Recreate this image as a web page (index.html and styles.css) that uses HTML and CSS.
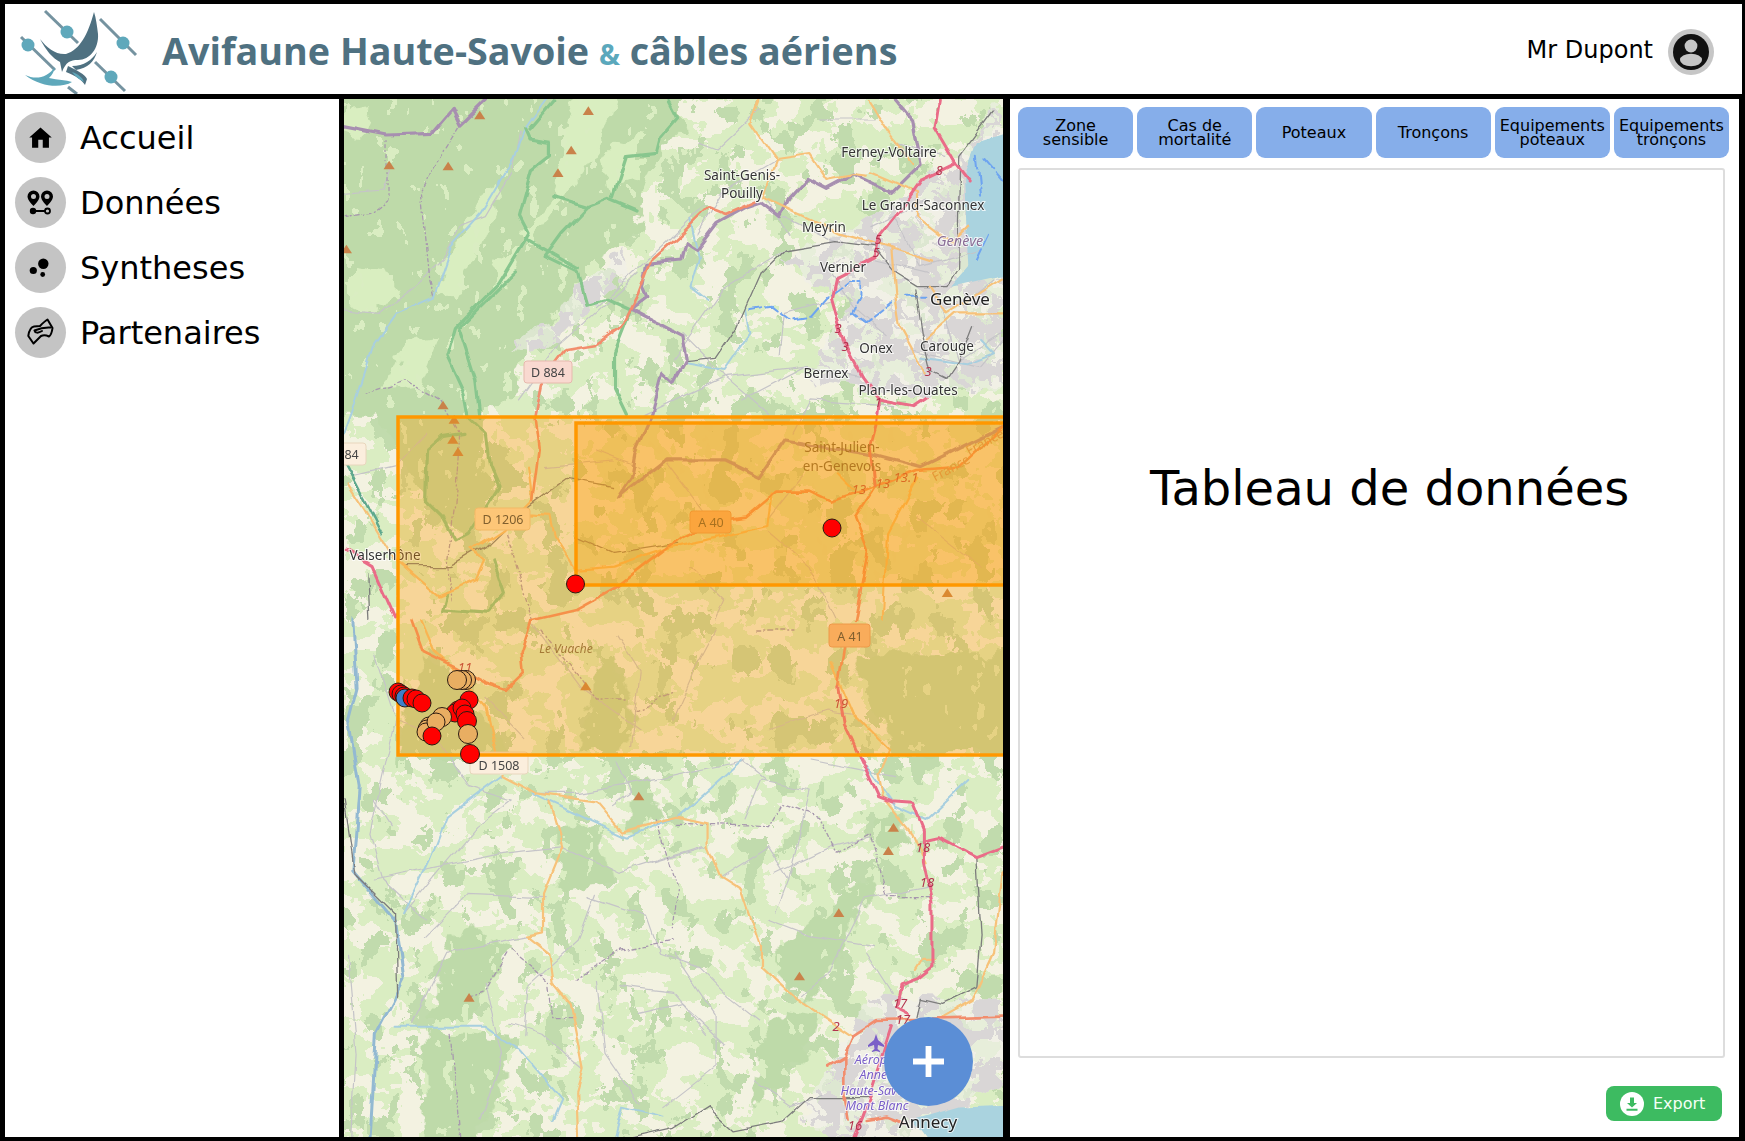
FILE: index.html
```html
<!DOCTYPE html>
<html lang="fr">
<head>
<meta charset="utf-8">
<title>Avifaune Haute-Savoie &amp; câbles aériens</title>
<link rel="stylesheet" href="styles.css">
</head>
<body>
<div class="app">
  <header class="topbar">
    <svg class="logo" viewBox="5 4 145 90" aria-hidden="true">
      <g class="logo-lines">
        <path d="M45,11 L78,43"/><path d="M100,19 L136,55"/><path d="M21,37 L55,70"/><path d="M95,62 L125,91"/><path d="M68,87 L77,94"/>
      </g>
      <g class="logo-dots">
        <circle cx="67" cy="32" r="6.5"/><circle cx="123" cy="43" r="6.5"/><circle cx="28" cy="45" r="6.5"/><circle cx="111" cy="77" r="6.5"/>
      </g>
      <path class="logo-dark" d="M94,12 C88,34 80,50 66,54 C56,55 47,48 40,39 C46,50 52,58 60,62 L62,72 C66,62 70,60 78,60 C90,60 99,48 98,34 C97,26 96,18 94,12Z"/>
      <path class="logo-dark" d="M97,52 C94,62 88,68 76,70 L72,66 C84,66 92,60 97,52Z"/>
      <path class="logo-teal" d="M25,75 C36,80 47,78 55,67 C54,72 52,75 49,78 C58,80 66,80 72,82 C62,88 42,88 25,75Z"/>
      <path class="logo-dark" d="M68,66 C76,70 85,74 87,79 L85,85 C82,80 76,76 66,72Z"/>
      <path class="logo-teal" d="M72,72 C78,74 82,77 84,82 C80,80 76,77 72,72Z"/>
    </svg>
    <h1 class="title">Avifaune Haute-Savoie <span class="amp">&amp;</span> câbles aériens</h1>
    <div class="user">
      <span class="user-name">Mr Dupont</span>
      <svg class="avatar" viewBox="0 0 46 46" aria-hidden="true">
        <circle cx="23" cy="23" r="23" fill="#c6c6c6"/>
        <circle cx="23" cy="23" r="18" fill="#111"/>
        <circle cx="23" cy="17" r="6.4" fill="#c6c6c6"/>
        <ellipse cx="23" cy="31" rx="11" ry="6.2" fill="#c6c6c6"/>
      </svg>
    </div>
  </header>

  <div class="main">
    <nav class="sidebar">
      <a class="nav-item">
        <span class="nav-icon"><svg viewBox="0 0 24 24" class="ico-home"><path d="M10 21v-7h4v7h5.500v-9H22L12 3 2 12h2.500v9z"/></svg></span>
        <span class="nav-label">Accueil</span>
      </a>
      <a class="nav-item">
        <span class="nav-icon"><svg viewBox="0 0 51 51" class="ico-full">
          <path fill-rule="evenodd" d="M18.500,13.500 a6,6 0 0 1 6,6 c0,4 -6,9.500 -6,9.500 s-6,-5.500 -6,-9.500 a6,6 0 0 1 6,-6z M18.500,17 a2.500,2.500 0 1 0 0,5 a2.500,2.500 0 1 0 0,-5z"/>
          <path fill-rule="evenodd" d="M32,13.500 a6,6 0 0 1 6,6 c0,4 -6,9.500 -6,9.500 s-6,-5.500 -6,-9.500 a6,6 0 0 1 6,-6z M32,17 a2.500,2.500 0 1 0 0,5 a2.500,2.500 0 1 0 0,-5z"/>
          <circle cx="18" cy="34" r="3.200"/>
          <path d="M18,34 H30" stroke="#000" stroke-width="2"/>
          <circle cx="32.500" cy="34" r="2.500" fill="none" stroke="#000" stroke-width="1.800"/>
        </svg></span>
        <span class="nav-label">Données</span>
      </a>
      <a class="nav-item">
        <span class="nav-icon"><svg viewBox="0 0 51 51" class="ico-full">
          <circle cx="28.300" cy="21.800" r="5.200"/><circle cx="18.300" cy="28.500" r="3.600"/><circle cx="27.700" cy="32.500" r="2.400"/>
        </svg></span>
        <span class="nav-label">Syntheses</span>
      </a>
      <a class="nav-item">
        <span class="nav-icon"><svg viewBox="0 0 51 51" class="ico-full">
          <path class="hs" d="M13.300,29 C14,24 15,20 19,19.500 L25,19 C28,16 30,14 32.500,12.500 L37.500,21 C37,25 36,28 34,29.500 C31,28 28,28 26,29 L18.500,36.500 Z"/>
          <path class="hs" d="M19.500,23.500 C23,22 28,20 35.500,20.500 M19.500,23.500 C20,26 23,26.500 27,24"/>
        </svg></span>
        <span class="nav-label">Partenaires</span>
      </a>
    </nav>

    <section class="map">
      <svg class="map-svg" viewBox="344 99 659 1038" aria-label="Carte">
        <defs>
          <filter id="fForest" x="344" y="99" width="659" height="1038" filterUnits="userSpaceOnUse" color-interpolation-filters="sRGB">
            <feTurbulence type="fractalNoise" baseFrequency="0.035 0.028" numOctaves="5" seed="7"/>
            <feColorMatrix values="0 0 0 0 .755  0 0 0 0 .86  0 0 0 0 .68  1 0 0 0 0"/>
            <feComponentTransfer><feFuncA type="discrete" tableValues="0 0 0 0 0 0 1 1 1 1"/></feComponentTransfer>
            <feGaussianBlur stdDeviation=".5"/>
          </filter>
          <filter id="fLight" x="344" y="99" width="659" height="1038" filterUnits="userSpaceOnUse" color-interpolation-filters="sRGB">
            <feTurbulence type="fractalNoise" baseFrequency="0.03 0.04" numOctaves="4" seed="23"/>
            <feColorMatrix values="0 0 0 0 .855  0 0 0 0 .93  0 0 0 0 .76  1 0 0 0 0"/>
            <feComponentTransfer><feFuncA type="discrete" tableValues="0 0 0 0 0 1 1 1 1 1"/></feComponentTransfer>
            <feGaussianBlur stdDeviation=".5"/>
          </filter>
          <filter id="fStreak" x="344" y="99" width="659" height="1038" filterUnits="userSpaceOnUse" color-interpolation-filters="sRGB">
            <feTurbulence type="fractalNoise" baseFrequency="0.07 0.05" numOctaves="3" seed="41"/>
            <feColorMatrix values="0 0 0 0 .855  0 0 0 0 .93  0 0 0 0 .76  1 0 0 0 0"/>
            <feComponentTransfer><feFuncA type="discrete" tableValues="0 0 0 0 0 0 0 1 1 1"/></feComponentTransfer>
            <feGaussianBlur stdDeviation=".5"/>
          </filter>
          <filter id="fUrban" x="344" y="99" width="659" height="1038" filterUnits="userSpaceOnUse" color-interpolation-filters="sRGB">
            <feTurbulence type="fractalNoise" baseFrequency="0.05" numOctaves="3" seed="11"/>
            <feColorMatrix values="0 0 0 0 .85  0 0 0 0 .84  0 0 0 0 .84  1 0 0 0 0"/>
            <feComponentTransfer><feFuncA type="discrete" tableValues="0 0 0 0 0 1 1 1 1 1"/></feComponentTransfer>
          </filter>
          <filter id="wobF" x="344" y="99" width="659" height="1038" filterUnits="userSpaceOnUse" color-interpolation-filters="sRGB">
            <feTurbulence type="fractalNoise" baseFrequency="0.05" numOctaves="3" seed="5" result="n"/>
            <feDisplacementMap in="SourceGraphic" in2="n" scale="26" xChannelSelector="R" yChannelSelector="G"/>
          </filter>
          <filter id="wobR" x="344" y="99" width="659" height="1038" filterUnits="userSpaceOnUse" color-interpolation-filters="sRGB">
            <feTurbulence type="fractalNoise" baseFrequency="0.035" numOctaves="2" seed="9" result="n"/>
            <feDisplacementMap in="SourceGraphic" in2="n" scale="9" xChannelSelector="R" yChannelSelector="G"/>
          </filter>
          <clipPath id="cUrban">
            <path d="M780,260 L860,225 L920,180 L960,160 L1003,100 L1003,390 L900,395 L810,380 L850,300Z"/>
            <path d="M800,1120 L870,995 L1003,1000 L1003,1080 L920,1137 L830,1137Z"/>
            <path d="M505,350 L530,330 L560,320 L570,295 L600,270 L630,250 L620,280 L590,310 L560,340 L530,352Z"/>
          </clipPath>
          <path id="pk" d="M-13,13 L0,-13 L13,13Z"/>
        </defs>

        <rect class="m-base" x="344" y="99" width="659" height="1038"/>
        <rect x="344" y="99" width="659" height="1038" filter="url(#fLight)"/>
        <rect x="344" y="99" width="659" height="1038" filter="url(#fForest)"/>

        <g filter="url(#wobF)">
          <g transform="matrix(.4274 0 0 .3333 340 100)">
            <path class="f" d="M-80,-80 L800,-80 L800,80 L720,230 L690,420 L590,500 L520,640 L440,720 L400,880 L340,945 L330,1100 L370,1160 L300,1320 L200,1200 L130,1050 L80,950 L-80,950Z"/>
          </g>
          <g transform="matrix(.4274 0 0 .3333 340 620)">
            <path class="f" d="M200,1230 L390,1250 L380,1400 L290,1640 L200,1640Z"/>
            <path class="f" d="M240,1000 L300,910 L400,990 L340,1100 L300,1200 L220,1200Z"/>
            <path class="f" d="M1020,980 L1240,760 L1230,850 L1150,1060 L1090,1140 L1020,1050Z"/>
            <path class="f" d="M980,1300 L1040,1160 L1120,1180 L1080,1330 L960,1470Z"/>
            <path class="f" d="M680,480 L710,470 L760,590 L680,650Z"/>
            <path class="f" d="M1240,600 L1320,590 L1320,680 L1250,690Z"/>
            <path class="f" d="M500,640 L600,600 L640,800 L520,820Z"/>
            <path class="f" d="M200,100 L420,420 L130,420Z"/>
            <path class="f" d="M620,60 L700,300 L660,400 L560,400Z"/>
            <path class="f" d="M1200,100 L1640,100 L1640,400 L1300,400Z"/>
          </g>
          <g class="lgt">
            <path d="M490,180 L500,200 L480,250 L455,300 L440,295 L445,260 L470,215Z"/>
            <path d="M552,200 L575,90 L617,90 L600,150 L570,190 L530,240 L520,232Z"/>
            <path d="M350,265 L385,270 L400,300 L370,310 L350,300Z"/>
            <path d="M405,340 L440,335 L420,385 L385,390 L400,355Z"/>
            <path d="M330,115 L375,110 L360,140 L330,135Z"/>
            <path d="M500,250 L520,250 L505,290 L490,290Z"/>
            <path d="M600,160 L640,130 L640,180 L610,190Z"/>
          </g>
        </g>
        <rect x="344" y="99" width="659" height="1038" filter="url(#fStreak)"/>
        <g filter="url(#wobF)">
          <rect class="m-urbanbase" x="344" y="99" width="659" height="1038" clip-path="url(#cUrban)"/>
          <g clip-path="url(#cUrban)"><rect x="344" y="99" width="659" height="1038" filter="url(#fUrban)"/></g>
        </g>

        <g filter="url(#wobR)">
        <g class="t" transform="matrix(.4274 0 0 .3333 340 100)">
          <path class="lake" d="M1640,70 L1490,130 L1460,230 L1470,500 L1430,560 L1640,500Z"/>
          <g class="mn">
            <path d="M700,520 L510,740 L420,900"/><path d="M1040,450 L900,560 L780,780"/><path d="M1160,425 L1040,350"/><path d="M850,320 L770,420 L600,620"/><path d="M1020,180 L900,270 L840,400"/><path d="M1100,800 L900,830 L800,890 L700,950"/><path d="M1220,830 L1090,800 L940,900"/><path d="M1370,300 L1240,380"/><path d="M800,700 L900,830 L1000,940"/><path d="M1150,600 L1040,640 L1030,760"/><path d="M1280,710 L1200,620 L1150,520"/><path d="M1400,590 L1450,780 L1550,700"/><path d="M1300,920 L1100,900 L1060,1000"/><path d="M1340,750 L1500,800 L1552,720"/><path d="M1470,600 L1530,540"/><path d="M10,630 L90,640 L170,560 L240,480 L280,380 L340,350 L400,220 L420,100"/><path d="M10,280 L100,270 L120,200"/><path d="M600,1050 L700,1100"/><path d="M760,1080 L860,1250"/><path d="M1080,1130 L1000,1260"/><path d="M1000,1290 L1100,1400 L1160,1560"/><path d="M820,1400 L900,1500 L880,1560"/><path d="M980,30 L880,150 L840,130"/><path d="M1120,60 L1250,60"/><path d="M1300,130 L1420,170"/><path d="M1300,350 L1360,500 L1500,450"/><path d="M1250,480 L1380,520"/><path d="M1000,300 L1050,400"/><path d="M480,1100 L640,1080"/><path d="M30,1130 L130,1100 L200,1000"/><path d="M1350,1250 L1500,1400"/>
          </g>
          <g class="dash-p">
            <path d="M10,350 L70,340 L110,300 L110,120"/><path d="M280,80 L190,270 L210,540 L220,590"/><path d="M60,880 L150,840 L240,910 L280,1000 L270,1200 L250,1400 L260,1500"/><path d="M390,1300 L450,1560"/>
          </g>
          <path class="river" d="M480,0 L430,90 L400,190 L330,340 L260,440 L220,590 L130,640 L80,730 L30,930 L10,1000"/>
          <path class="river-g" d="M10,1080 L40,1150 L100,1300"/>
          <path class="river" d="M810,790 L900,810 L960,700 L950,630"/>
          <path class="river" d="M820,360 L840,470 L820,560 L860,600"/>
          <path class="river" d="M1500,720 L1530,760 L1470,790 L1360,770"/>
          <g class="dash-b">
            <path d="M960,630 L1010,620 L1050,660 L1100,650 L1140,590 L1190,540 L1220,540 L1220,590 L1200,640 L1230,670 L1290,610"/><path d="M1320,590 L1370,590"/><path d="M1490,170 L1500,290"/><path d="M1490,480 L1520,400"/><path d="M1510,180 L1550,240"/>
          </g>
          <g class="rail">
            <path d="M810,785 L880,775 L930,680 L985,520 L1040,450 L1160,425 L1250,440 L1300,520 L1350,560 L1420,560 L1445,510 L1450,170 L1530,30"/><path d="M1345,570 L1360,700 L1380,810 L1420,835 L1450,780 L1480,680"/><path d="M440,1220 L530,1135 L640,1160"/><path d="M150,1400 L260,1400 L340,1340 L380,1290"/><path d="M550,1310 L640,1360 L790,1330"/><path d="M70,1560 L65,1420"/>
          </g>
          <path class="park" d="M430,90 L440,120 L490,130 L490,170 L450,210 L420,350 L440,400 L370,550 L270,680 L250,770 L290,880 L300,950 L340,1000 L350,1100 L370,1160 L300,1300 L270,1320 L240,1250 L200,1200 L205,1050 L240,1010 L290,1000"/>
          <path class="park" d="M500,290 L580,320 L630,295 L695,330 M580,320 L520,400 L480,470 L560,520 L580,610 L620,595 L680,630 L640,760 L640,860 L670,940"/>
          <path class="park" d="M770,0 L790,50 L750,110 L740,160 L670,170 L640,290 M430,415 L560,510 M440,90 L500,0 M415,510 L280,680 L320,840 L330,950"/>
          <path class="park" d="M360,1380 L385,1480 L350,1540 L240,1530 L250,1480"/>
          <path class="border" d="M10,80 L110,105 L215,100 L265,25 L285,75 L345,0"/>
          <path class="border" d="M1300,0 L1340,60 L1350,130 L1360,190 L1290,280 L1200,225 L1140,265 L1095,235 L1050,300 L1030,350 L985,305 L950,320 L880,370 L835,445 L810,425 L800,480 L720,490 L710,560 L720,590 L680,630 L800,710 L810,780 L780,850 L755,820 L730,940 L690,1060 L680,1130 L650,1190 L760,1080 L900,1080 L980,1130 L1040,1020 L1240,1060 L1360,1100 L1440,1050 L1550,980"/>
          <g class="sec">
            <path d="M980,0 L960,70 L1020,180 L1100,165 L1140,240 L1200,225 L1230,230"/><path d="M1020,180 L990,290 L1170,400 L1290,445 L1390,485"/><path d="M1235,0 L1290,110 L1340,190"/><path d="M1290,445 L1300,600 L1310,680 L1370,820"/><path d="M1370,720 L1440,640 L1568,640"/><path d="M1380,560 L1420,640 L1568,520"/><path d="M1240,220 L1350,280 L1350,350 L1430,430 L1470,380"/><path d="M20,1150 L60,1230 L130,1380 L230,1490 L320,1440 L340,1380 L310,1350 L380,1290 L450,1200 L440,1100"/><path d="M440,1240 L490,1245 L500,1310 L550,1410 L640,1400 L780,1340 L1000,1275 L1010,1180"/><path d="M1350,1130 L1280,1300 L1270,1560"/><path d="M1160,1120 L1200,1170"/>
          </g>
          <path class="pri" d="M970,305 L900,345 L860,325 L800,400 L730,480 L700,580 L660,680 L600,735 L530,750 L470,850 L455,950 L465,1050 L450,1200"/>
          <path class="pri" d="M450,1560 L550,1530 L650,1460 L800,1310 L870,1265 L950,1250 L1020,1175 L1100,1175 L1150,1205 L1210,1180 L1250,1160 L1350,1110 L1450,1100 L1550,980"/>
          <path class="pri" d="M1250,1160 L1205,1250 L1235,1350 L1205,1560"/>
          <path class="mot" d="M130,1560 L75,1400 L10,1350"/>
          <path class="mot" d="M1400,0 L1390,80 L1440,190 L1470,240"/>
          <path class="mot" d="M1440,190 L1360,240 L1310,330 L1260,410 L1250,470 L1160,530 L1150,590 L1180,730 L1220,830 L1260,900 L1340,920 L1370,895"/>
          <path class="mot" d="M1260,900 L1255,960 L1240,1030 L1250,1160"/>
        </g>

        <g class="b" transform="matrix(.4274 0 0 .3333 340 620)">
          <path class="lake" d="M1340,1500 L1450,1460 L1640,1450 L1640,1640 L1420,1640Z"/>
          <g class="mn">
            <path d="M80,100 L130,300 L70,640 L100,780 L200,900"/><path d="M130,300 L220,340 L300,500 L400,540"/><path d="M400,540 L320,620 L240,740 L150,880"/><path d="M80,780 L230,740 L380,700 L520,680"/><path d="M480,830 L300,820 L200,950"/><path d="M520,680 L650,760 L850,680"/><path d="M860,680 L730,730"/><path d="M890,770 L1000,680 L1050,780 L1020,880"/><path d="M1050,780 L1100,510 L990,480 L950,600"/><path d="M1000,480 L940,420"/><path d="M580,830 L720,890 L750,1000 L840,1040 L910,1130 L980,1200"/><path d="M440,950 L360,970 L250,1000 L170,1210"/><path d="M570,1350 L470,1240 L400,1210"/><path d="M600,1080 L620,1300 L700,1450"/><path d="M780,1000 L880,1190 L880,1340 L760,1460"/><path d="M1080,1130 L1150,1050 L1230,840 L1380,800"/><path d="M1240,650 L1150,680 L1020,760"/><path d="M650,420 L680,520 L640,560"/><path d="M460,520 L560,520 L650,500 L770,470 L950,420"/><path d="M1100,420 L1300,470"/><path d="M80,540 L120,620"/><path d="M650,50 L700,150 L680,380"/><path d="M880,30 L830,150 L780,300"/><path d="M1000,330 L1140,270 L1200,280"/><path d="M450,10 L560,200 L700,330"/><path d="M430,350 L340,230"/><path d="M1000,900 L1100,950 L1250,980"/><path d="M1230,1000 L1290,1120"/><path d="M970,1380 L1060,1460 L1130,1420"/><path d="M700,1180 L800,1150 L900,1270"/><path d="M20,1000 L40,1300 L30,1540"/><path d="M600,820 L560,960 L440,1100 L430,1250"/><path d="M650,1100 L780,1120 L860,1240"/><path d="M340,1090 L380,1300 L330,1500"/>
          </g>
          <g class="dash-p">
            <path d="M740,600 L790,800 L780,920"/><path d="M790,610 L1000,620 L1030,550 L1120,590 L1160,700 L1240,640 L1280,830 L1380,830"/><path d="M260,1240 L280,1547"/><path d="M400,990 L490,1090 L500,1190 L550,1190"/><path d="M550,1080 L660,990 L780,960"/><path d="M470,30 L600,240 L670,240"/><path d="M690,270 L780,220"/><path d="M300,1130 L340,1110 L390,1000"/><path d="M975,30 L1060,30"/>
          </g>
          <path class="river-d" d="M30,0 L40,200 L20,300 L45,500 L30,750 L130,900 L150,1080 L85,1240 L70,1560"/>
          <path class="river" d="M380,465 L250,590 L210,720 L150,880"/>
          <path class="river" d="M450,520 L670,650 L790,590 L940,420"/>
          <path class="river" d="M1220,420 L1300,560 L1370,600 L1470,480"/>
          <path class="river" d="M130,1220 L340,1220 L420,1290 L520,1440 L500,1500"/>
          <path class="river" d="M640,1560 L660,1460 L760,1490"/>
          <g class="rail">
            <path d="M1490,710 L1500,950 L1490,1100 L1410,1150 L1360,1135 L1350,1190"/><path d="M660,1560 L780,1525 L860,1460 L920,1530 L1040,1500 L1100,1430 L1240,1430"/><path d="M10,540 L35,760 L130,880 L135,1130"/>
          </g>
          <g class="sec">
            <path d="M190,0 L220,90 L270,150 L340,260 L365,400"/><path d="M1150,130 L1200,280 L1285,390 L1260,460 L1270,530 L1340,640 L1370,730"/><path d="M380,465 L460,520 L600,545 L660,635 L790,590 L860,610 L860,680 L890,770 L940,810 L985,980 L985,1040 L1060,1130 L1200,1250"/><path d="M490,545 L520,680 L475,820 L475,940 L440,950 L490,1000 L500,1090 L540,1150 L570,1350 L555,1420 L560,1560"/><path d="M1550,760 L1530,1000 L1480,1140 L1410,1190"/><path d="M1345,1050 L1360,1020 L1390,1020"/>
          </g>
          <path class="pri" d="M165,0 L190,90 L270,140 L340,190 L390,210 L430,160 L425,100 L450,0"/>
          <path class="pri" d="M1200,1250 L1260,1200 L1552,1190"/>
          <path class="pri" d="M1200,1250 L1180,1310 L1140,1340 M1180,1310 L1180,1420 L1190,1500 M1230,1500 L1280,1490 L1320,1510"/>
          <path class="pri" d="M1180,80 L1165,200"/>
          <path class="mot" d="M1165,200 L1180,310 L1220,420 L1260,530 L1290,545 L1340,550 L1365,630 L1365,730 L1385,850 L1385,1040 L1350,1075 L1310,1095 L1300,1160 L1330,1180"/>
          <path class="mot" d="M1365,660 L1400,650 L1490,710 L1552,680"/>
          <path class="mot" d="M1290,1220 L1230,1460 L1200,1560"/>
        </g>
        </g>

        <g class="pk" transform="matrix(.4274 0 0 .3333 340 100)">
          <use href="#pk" x="327" y="45"/><use href="#pk" x="581" y="32"/><use href="#pk" x="541" y="150"/><use href="#pk" x="510" y="218"/><use href="#pk" x="253" y="198"/><use href="#pk" x="115" y="195"/><use href="#pk" x="15" y="447"/><use href="#pk" x="241" y="915"/><use href="#pk" x="267" y="958"/><use href="#pk" x="264" y="1018"/><use href="#pk" x="276" y="1055"/><use href="#pk" x="1421" y="1478"/>
        </g>
        <g class="pk" transform="matrix(.4274 0 0 .3333 340 620)">
          <use href="#pk" x="575" y="198"/><use href="#pk" x="699" y="528"/><use href="#pk" x="1295" y="622"/><use href="#pk" x="1283" y="692"/><use href="#pk" x="1167" y="878"/><use href="#pk" x="1075" y="1068"/><use href="#pk" x="302" y="1132"/>
        </g>

        <g class="shield">
          <rect class="s-pink" x="524" y="361" width="48" height="22" rx="3"/><text x="548" y="377">D 884</text>
          <rect class="s-cream" x="330" y="443" width="36" height="22" rx="3"/><text x="348" y="459">884</text>
          <rect class="s-tan" x="475" y="508" width="55" height="22" rx="3"/><text x="503" y="524">D 1206</text>
          <rect class="s-or" x="690" y="511" width="41" height="22" rx="3"/><text x="711" y="527">A 40</text>
          <rect class="s-or" x="829" y="624" width="41" height="23" rx="3"/><text x="850" y="641">A 41</text>
          <rect class="s-cream" x="470" y="752" width="58" height="22" rx="3"/><text x="499" y="770">D 1508</text>
        </g>
        <g class="lbl">
          <text x="889" y="157">Ferney-Voltaire</text>
          <text x="742" y="180">Saint-Genis-</text>
          <text x="742" y="198">Pouilly</text>
          <text x="923" y="210">Le Grand-Saconnex</text>
          <text x="824" y="232">Meyrin</text>
          <text x="843" y="272">Vernier</text>
          <text class="lbl-big" x="960" y="305">Genève</text>
          <text class="lbl-adm" x="960" y="246">Genève</text>
          <text x="876" y="353">Onex</text>
          <text x="947" y="351">Carouge</text>
          <text x="826" y="378">Bernex</text>
          <text x="908" y="395">Plan-les-Ouates</text>
          <text class="lbl-dim" x="842" y="452">Saint-Julien-</text>
          <text class="lbl-dim" x="842" y="471">en-Genevois</text>
          <text x="385" y="560">Valserhône</text>
          <text class="lbl-lieu" x="566" y="653">Le Vuache</text>
          <text class="lbl-big" x="928" y="1128">Annecy</text>
          <text class="lbl-air" x="879" y="1064">Aéroport</text>
          <text class="lbl-air" x="879" y="1079">Annecy</text>
          <text class="lbl-air" x="877" y="1095">Haute-Savoie</text>
          <text class="lbl-air" x="877" y="1110">Mont Blanc</text>
          <text class="lbl-fr" transform="translate(987 446) rotate(-28)">France</text>
          <text class="lbl-fr" transform="translate(953 472) rotate(-28)">France</text>
        </g>
        <path class="plane" d="M876,1034 L878,1040 L884,1045 L884,1047 L878,1045 L877.500,1049 L880,1051 L880,1052 L876,1051 L872,1052 L872,1051 L874.500,1049 L874,1045 L868,1047 L868,1045 L874,1040Z"/>
        <g class="rn">
          <text x="939" y="175">8</text><text x="878" y="244">5</text><text x="876" y="257">5</text><text x="838" y="333">3</text><text x="845" y="351">3</text><text x="928" y="376">3</text><text x="878" y="407">1</text><text x="859" y="494">13</text><text x="883" y="488">13</text><text x="906" y="482">13.1</text><text x="841" y="708">19</text><text x="923" y="852">18</text><text x="927" y="887">18</text><text x="900" y="1008">17</text><text x="903" y="1024">17</text><text x="836" y="1031">2</text><text x="855" y="1130">16</text><text x="465" y="672">11</text>
        </g>

        <rect class="zone" x="398" y="417" width="700" height="338"/>
        <rect class="zone" x="576" y="423" width="600" height="162"/>

        <g class="mk">
          <circle class="red" cx="398" cy="692" r="9"/><circle class="red" cx="401" cy="694" r="9"/><circle class="red" cx="404" cy="696" r="9"/>
          <circle class="blue" cx="405" cy="698" r="9"/>
          <circle class="red" cx="412" cy="698" r="9"/><circle class="red" cx="416" cy="699" r="9"/><circle class="red" cx="422" cy="703" r="9"/>
          <circle class="ora" cx="466" cy="680" r="9.500"/><circle class="ora" cx="462" cy="680" r="9.500"/><circle class="ora" cx="457" cy="680" r="9.500"/>
          <circle class="red" cx="469" cy="700" r="9"/>
          <circle class="ora" cx="429" cy="726" r="9"/><circle class="ora" cx="427" cy="729" r="9"/><circle class="ora" cx="426" cy="732" r="9"/>
          <circle class="red" cx="458" cy="710" r="9"/><circle class="red" cx="455" cy="713" r="9"/>
          <circle class="ora" cx="442" cy="717" r="9.500"/><circle class="ora" cx="436" cy="722" r="9"/>
          <circle class="red" cx="462" cy="708" r="9"/><circle class="red" cx="465" cy="714" r="9"/><circle class="red" cx="467" cy="721" r="9.500"/>
          <circle class="ora" cx="468" cy="734" r="9.500"/>
          <circle class="red" cx="432" cy="736" r="9"/>
          <circle class="red" cx="470" cy="754" r="9.500"/>
          <circle class="red" cx="575.500" cy="584" r="9"/>
          <circle class="red" cx="832" cy="528" r="9"/>
        </g>
      </svg>
      <button class="fab" type="button" aria-label="Ajouter">
        <svg viewBox="0 0 32 32"><path d="M13,0 H19 V13 H32 V19 H19 V32 H13 V19 H0 V13 H13Z"/></svg>
      </button>
    </section>

    <section class="panel">
      <div class="tabs">
        <button class="tab" type="button">Zone<br>sensible</button>
        <button class="tab" type="button">Cas de<br>mortalité</button>
        <button class="tab" type="button">Poteaux</button>
        <button class="tab" type="button">Tronçons</button>
        <button class="tab" type="button">Equipements<br>poteaux</button>
        <button class="tab" type="button">Equipements<br>tronçons</button>
      </div>
      <div class="table-box">
        <h2 class="table-title">Tableau de données</h2>
      </div>
      <div class="panel-foot">
        <button class="export" type="button">
          <svg viewBox="0 0 24 24" class="export-ico"><circle cx="12" cy="12" r="12" fill="#fff"/><path d="M10,5.500 H14 V11 H17 L12,15.500 L7,11 H10Z M6.500,16.800 H17.500 V18.800 H6.500Z" fill="#3dbb61"/></svg>
          <span>Export</span>
        </button>
      </div>
    </section>
  </div>
</div>
</body>
</html>
```

FILE: styles.css
```css
* { box-sizing: border-box; }
html, body { margin: 0; padding: 0; background: #000; }
body { font-family: "DejaVu Sans", sans-serif; color: #000; }

.app {
  width: 1745px;
  height: 1141px;
  background: #000;
  padding: 4px 3px 4px 5px;
  display: flex;
  flex-direction: column;
  gap: 5px;
  overflow: hidden;
}

/* Header */
.topbar {
  height: 90px;
  flex: none;
  background: #fff;
  display: flex;
  align-items: center;
}
.logo { width: 145px; height: 90px; flex: none; display: block; filter: blur(.35px); }
.logo-lines path { stroke: #7593a0; stroke-width: 3; fill: none; }
.logo-dots circle { fill: #5fa8bb; }
.logo-dark { fill: #4f7181; }
.logo-teal { fill: #5fa8bb; }
.title {
  margin: 3px 0 0 12px;
  font-family: "Open Sans", sans-serif;
  font-weight: 700;
  font-size: 37.7px;
  line-height: 1;
  color: #4f7181;
  white-space: nowrap;
}
.amp { color: #5ba8bc; font-size: 28px; }
.user {
  margin-left: auto;
  margin-right: 28px;
  margin-top: 5px;
  display: flex;
  align-items: center;
  gap: 15px;
}
.user-name { font-size: 24px; margin-top: -3px; }
.avatar { width: 46px; height: 46px; display: block; }

/* Main */
.main { flex: 1; display: flex; min-height: 0; }

.sidebar {
  width: 334px;
  flex: none;
  background: #fff;
  padding: 13px 0 0 10px;
  display: flex;
  flex-direction: column;
  gap: 14px;
}
.nav-item {
  display: flex;
  align-items: center;
  gap: 14px;
  height: 51px;
  font-size: 32px;
  color: #000;
}
.nav-label { margin-top: 1px; }
.nav-icon {
  width: 51px;
  height: 51px;
  border-radius: 50%;
  background: #c4c4c4;
  display: flex;
  align-items: center;
  justify-content: center;
  flex: none;
}
.ico-home { width: 27px; height: 27px; }
.ico-full { width: 51px; height: 51px; display: block; }
.hs { fill: none; stroke: #000; stroke-width: 2; stroke-linejoin: round; stroke-linecap: round; }

/* Map */
.map {
  position: relative;
  width: 659px;
  flex: none;
  margin-left: 5px;
  overflow: hidden;
  background: #f3f2e1;
}
.map-svg { width: 659px; height: 1038px; display: block; filter: blur(.5px); }
.m-base { fill: #f3f2e1; }
.m-urbanbase { fill: #f0eeea; fill-opacity: .6; }
.f { fill: #bedaa9; }
.lgt path { fill: #d9eec0; }
.lake { fill: #aad3df; }
.t path, .b path { vector-effect: non-scaling-stroke; stroke-linejoin: round; stroke-linecap: round; }
.mn path { fill: none; stroke: #c5c4c8; stroke-width: 1.2; }
.dash-p path { fill: none; stroke: #a798ae; stroke-width: 1.3; stroke-dasharray: 4 3 1 3; }
.river { fill: none; stroke: #a8cfdf; stroke-width: 2; }
.river-d { fill: none; stroke: #93b9d2; stroke-width: 3; }
.river-g { fill: none; stroke: #5fa88e; stroke-width: 2.500; }
.dash-b path { fill: none; stroke: #6ea4f0; stroke-width: 2; stroke-dasharray: 12 4; }
.rail path { fill: none; stroke: #7d7d7d; stroke-width: 1.300; }
.park { fill: none; stroke: #88c68e; stroke-width: 3.200; }
.border { fill: none; stroke: #a78fb0; stroke-width: 3.200; }
.sec path { fill: none; stroke: #f7c27a; stroke-width: 2.200; }
.pri { fill: none; stroke: #f28d6d; stroke-width: 2.600; }
.mot { fill: none; stroke: #ea6c88; stroke-width: 3; }
.pk { fill: #c9824a; }

.shield text {
  font-family: "Noto Sans", sans-serif;
  font-size: 12.5px;
  fill: #444;
  text-anchor: middle;
}
.s-pink { fill: #f9d9d0; stroke: #e6b9ad; }
.s-cream { fill: #fbeedd; stroke: #e8d6bd; }
.s-tan { fill: #fcdcb0; stroke: #edc793; }
.s-or { fill: #f6b587; stroke: #e69a6c; }

.lbl text {
  font-family: "Noto Sans", sans-serif;
  font-size: 13.5px;
  fill: #333;
  text-anchor: middle;
  paint-order: stroke;
  stroke: rgba(255, 255, 255, .75);
  stroke-width: 2px;
}
.lbl .lbl-big { font-size: 17px; fill: #222; }
.lbl .lbl-adm { font-style: italic; fill: #8a6d96; font-size: 14.5px; }
.lbl .lbl-dim { fill: #5b5348; stroke: none; }
.lbl .lbl-lieu { font-style: italic; font-size: 12px; fill: #7a6a50; stroke: none; }
.lbl .lbl-air { font-style: italic; fill: #7a5fc8; font-size: 12.5px; }
.lbl .lbl-fr { fill: #c79a78; font-size: 13px; stroke: none; }
.plane { fill: #7a5fc8; }
.rn text {
  font-family: "Noto Sans", sans-serif;
  font-style: italic;
  font-size: 13px;
  fill: #b2344f;
  text-anchor: middle;
}

.zone { fill: #ff9800; fill-opacity: .32; stroke: #ff9800; stroke-width: 3.500; }
.mk circle { stroke: #2a1a10; stroke-width: 1; }
.mk .red { fill: #f00; }
.mk .ora { fill: #e9ae62; }
.mk .blue { fill: #3f7fc8; }

.fab {
  position: absolute;
  left: 540px;
  top: 918px;
  width: 89px;
  height: 89px;
  border: 0;
  padding: 0;
  border-radius: 50%;
  background: #5b8ed6;
  display: flex;
  align-items: center;
  justify-content: center;
}
.fab svg { width: 31px; height: 31px; fill: #fff; }

/* Panel */
.panel {
  width: 729px;
  flex: none;
  margin-left: 7px;
  background: #fff;
  padding: 8px 10px 0 8px;
  display: flex;
  flex-direction: column;
}
.tabs { display: flex; gap: 4px; height: 51px; flex: none; }
.tab {
  flex: 1;
  min-width: 0;
  border: 0;
  padding: 0;
  border-radius: 9px;
  background: #86aeea;
  color: #000;
  font-family: "DejaVu Sans", sans-serif;
  font-size: 16px;
  line-height: 14px;
}
.table-box {
  width: 707px;
  height: 890px;
  margin-top: 10px;
  flex: none;
  border: 2px solid #ddd;
  border-radius: 3px;
  background: #fff;
  padding: 289px 0 0 130px;
}
.table-title {
  margin: 0;
  font-weight: 400;
  font-size: 48px;
  line-height: 58px;
  white-space: nowrap;
}
.panel-foot { display: flex; justify-content: flex-end; margin-top: 28px; padding-right: 7px; }
.export {
  width: 116px;
  height: 35px;
  border: 0;
  border-radius: 8px;
  background: #3dbb61;
  color: #f4fff6;
  font-family: "DejaVu Sans", sans-serif;
  font-size: 16px;
  display: flex;
  align-items: center;
  gap: 9px;
  padding: 0 0 0 14px;
}
.export-ico { width: 24px; height: 24px; flex: none; }
```
